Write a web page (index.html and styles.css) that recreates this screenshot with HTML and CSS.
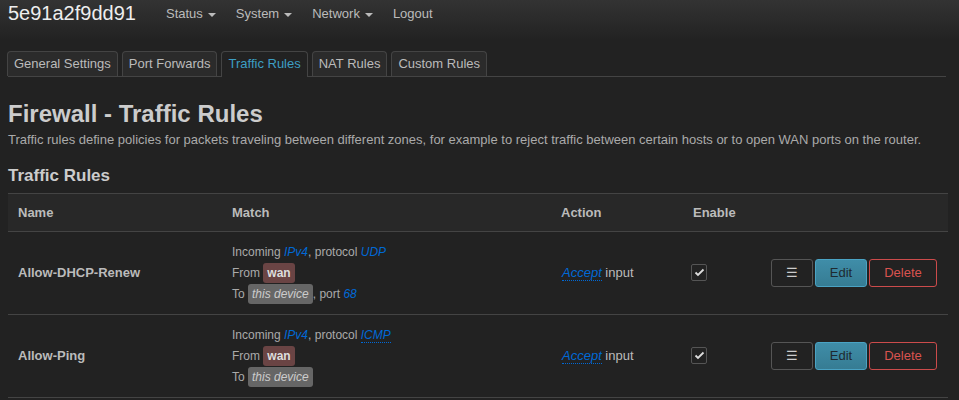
FILE: index.html
```html
<!DOCTYPE html>
<html>
<head>
<meta charset="utf-8">
<link rel="stylesheet" href="styles.css">
</head>
<body>
<header class="topbar">
  <span class="brand">5e91a2f9dd91</span>
  <nav class="nav">
    <a class="nav-item dd">Status</a>
    <a class="nav-item dd">System</a>
    <a class="nav-item dd">Network</a>
    <a class="nav-item">Logout</a>
  </nav>
</header>
<main class="main">
  <ul class="tabs">
    <li class="tab">General Settings</li>
    <li class="tab">Port Forwards</li>
    <li class="tab active">Traffic Rules</li>
    <li class="tab">NAT Rules</li>
    <li class="tab">Custom Rules</li>
  </ul>
  <h2 class="title">Firewall - Traffic Rules</h2>
  <p class="desc">Traffic rules define policies for packets traveling between different zones, for example to reject traffic between certain hosts or to open WAN ports on the router.</p>
  <h3 class="subtitle">Traffic Rules</h3>
  <div class="table">
    <div class="tr th">
      <div class="c c-name">Name</div>
      <div class="c c-match">Match</div>
      <div class="c c-action">Action</div>
      <div class="c c-enable">Enable</div>
      <div class="c c-btns"></div>
    </div>
    <div class="tr">
      <div class="c c-name name">Allow-DHCP-Renew</div>
      <div class="c c-match match">
        <div>Incoming <i class="lnk">IPv4</i>, protocol <i class="lnk">UDP</i></div>
        <div>From <span class="zone">wan</span></div>
        <div>To <span class="dev">this device</span>, port <i class="lnk">68</i></div>
      </div>
      <div class="c c-action"><i class="lnk dot">Accept</i> input</div>
      <div class="c c-enable"><span class="cb"><svg width="11" height="9" viewBox="0 0 11 9"><path d="M1.5 4.5 L4 7 L9.5 1.5" fill="none" stroke="#ddd" stroke-width="1.8"/></svg></span></div>
      <div class="c c-btns"><span class="btn menu">&#9776;</span><span class="btn edit">Edit</span><span class="btn del">Delete</span></div>
    </div>
    <div class="tr">
      <div class="c c-name name">Allow-Ping</div>
      <div class="c c-match match">
        <div>Incoming <i class="lnk">IPv4</i>, protocol <i class="lnk dot">ICMP</i></div>
        <div>From <span class="zone">wan</span></div>
        <div>To <span class="dev">this device</span></div>
      </div>
      <div class="c c-action"><i class="lnk dot">Accept</i> input</div>
      <div class="c c-enable"><span class="cb"><svg width="11" height="9" viewBox="0 0 11 9"><path d="M1.5 4.5 L4 7 L9.5 1.5" fill="none" stroke="#ddd" stroke-width="1.8"/></svg></span></div>
      <div class="c c-btns"><span class="btn menu">&#9776;</span><span class="btn edit">Edit</span><span class="btn del">Delete</span></div>
    </div>
  </div>
</main>
</body>
</html>
```
FILE: styles.css
```css
* { box-sizing: border-box; }
html, body { margin: 0; padding: 0; }
body {
  background: #222;
  color: #bbb;
  font-family: "Liberation Sans", Arial, sans-serif;
  font-size: 13px;
  line-height: 18px;
}
.topbar {
  height: 40px;
  background: linear-gradient(#333, #222);
  display: flex;
  align-items: center;
  padding: 0 8px;
}
.brand {
  font-size: 20px;
  color: #eee;
  width: 148px;
  margin-top: -14px;
}
.nav {
  display: flex;
  margin-top: -12px;
}
.nav-item {
  color: #bbb;
  font-size: 13px;
  padding: 0 10px;
}
.nav-item.dd::after {
  content: "";
  display: inline-block;
  margin-left: 5px;
  vertical-align: middle;
  border-left: 4px solid transparent;
  border-right: 4px solid transparent;
  border-top: 4px solid #bbb;
}
.main { padding: 0 8px; }
.tabs {
  list-style: none;
  margin: 11px 5px 0 0;
  padding: 0;
  display: flex;
  gap: 5px;
  border-bottom: 1px solid #444;
}
.tab {
  height: 25px;
  padding: 0 6px;
  line-height: 24px;
  border: 1px solid #444;
  border-bottom: none;
  border-radius: 4px 4px 0 0;
  background: #2b2b2b;
  color: #bbb;
  margin-bottom: -1px;
  margin-left: -1px;
}
.tab.active {
  background: #222;
  color: #3d9ec4;
  height: 26px;
}
.title {
  font-size: 24px;
  font-weight: bold;
  color: #ccc;
  margin: 22px 0 0;
  line-height: 30px;
}
.desc {
  margin: 2px 0 0;
  color: #aaa;
  line-height: 18px;
}
.subtitle {
  font-size: 17px;
  font-weight: bold;
  color: #ccc;
  margin: 16px 0 0;
  line-height: 22px;
}
.table {
  margin-top: 6px;
  width: 940px;
  border-top: 1px solid #444;
}
.tr {
  display: flex;
  align-items: center;
  border-bottom: 1px solid #444;
  min-height: 83px;
}
.tr.th {
  min-height: 38px;
  background: #282828;
  font-weight: bold;
  color: #bbb;
}
.c { padding: 0 10px; }
.c-name { width: 214px; }
.c-match { width: 329px; }
.c-action { width: 132px; }
.c-enable { width: 78px; }
.c-btns {
  flex: 1;
  display: flex;
  justify-content: flex-end;
  gap: 2px;
  padding-right: 11px;
}
.name { font-weight: bold; color: #bbb; }
.match { font-size: 12px; line-height: 21px; color: #aaa; }
.match > div { height: 21px; }
.lnk { color: #0069d6; font-style: italic; }
.lnk.dot { border-bottom: 1px dotted #0069d6; }
.c-action { color: #bbb; }
.c-action .lnk { margin-left: 1px; }
.zone, .dev {
  display: inline-block;
  line-height: 20px;
  padding: 0 4px;
  border-radius: 3px;
}
.zone { background: #6a4444; color: #ddd; font-weight: bold; }
.dev { background: #666; color: #ccc; font-style: italic; }
.cb {
  display: inline-flex;
  align-items: center;
  justify-content: center;
  width: 16px;
  height: 17px;
  border: 1px solid #555;
  border-radius: 2px;
  background: #222;
  margin-left: -2px;
  margin-top: -5px;
}
.btn {
  display: inline-flex;
  align-items: center;
  justify-content: center;
  height: 28px;
  border-radius: 3px;
  border: 1px solid #555;
  font-size: 13px;
}
.menu { width: 42px; color: #ccc; background: #222; }
.edit { width: 52px; background: linear-gradient(#3f8da8, #367c93); border-color: #4aa3c4; color: #1e2a30; }
.del { width: 68px; border-color: #cc4b4b; color: #d9534f; background: #222; }
```
